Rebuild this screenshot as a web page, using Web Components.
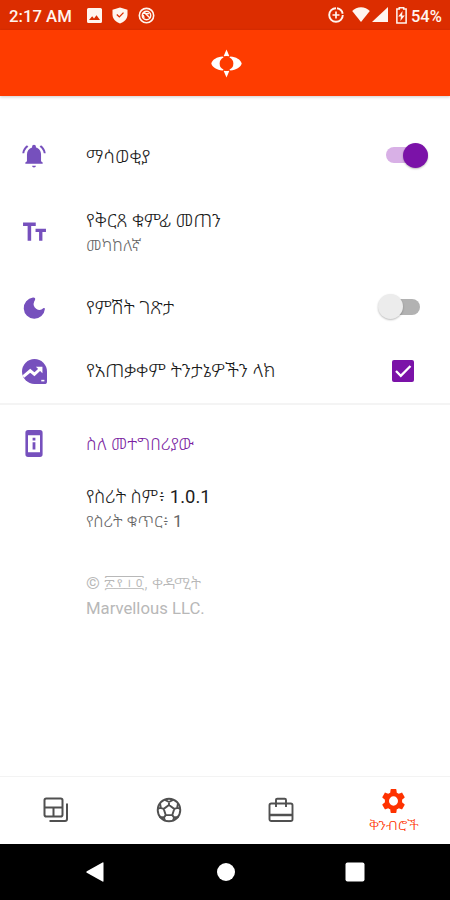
<!DOCTYPE html>
<html lang="am"><head><meta charset="utf-8"><title>ቅንብሮች</title>
<style>
html,body{margin:0;height:100%;background:#fff}
body{font-family:Roboto,"Noto Sans Ethiopic","Noto Sans",sans-serif;overflow:hidden}
</style></head><body>
<settings-app></settings-app>
<script>
const make=(name,html,init)=>customElements.define(name,class extends HTMLElement{
  connectedCallback(){
    if(this.shadowRoot)return;
    this.attachShadow({mode:'open'}).innerHTML=html;
    if(init)init(this,this.shadowRoot);
  }
});

/* One line of text, condensed or widened to the width given in "w". */
make('fit-text',`<style>
:host{display:block;white-space:nowrap;font-size:18px;line-height:24px;font-weight:300;color:#1c1c1c}
span{display:inline-block;transform-origin:0 50%}
</style><span><slot></slot></span>`,(el,root)=>{
  const s=root.querySelector('span');
  const natural=s.offsetWidth,w=+el.getAttribute('w');
  if(natural&&w){el.style.width=w+'px';s.style.transform=`scaleX(${w/natural})`}
});

const ICONS={
bell:['0 0 24 24','<path d="M12 22.500c1.100 0 1.700-.6 1.700-1.500h-3.400c0 .9.6 1.500 1.700 1.500zm6.500-5.700v-6.300c0-3.200-1.900-5.600-4.700-6.300v-.7a1.800 1.800 0 0 0-3.600 0v.7c-2.800.7-4.700 3.100-4.700 6.300v6.300L4 18v1.200h16V18zM6.800 3.400 5.500 2C3.100 3.800 1.500 6.300 1.200 9.400H3c.3-2.400 1.700-4.500 3.800-6zM21 9.400h1.800c-.3-3.100-1.900-5.600-4.300-7.400l-1.300 1.400c2.100 1.500 3.500 3.600 3.800 6z"/>'],
size:['0 0 24 24','<path d="M1 2.500v3.300h4.400V20h3.400V5.800h4.400V2.500zM13 8.500v3h3.400V20h3.200v-8.500H23v-3z"/>'],
moon:['0 0 24 24','<path d="M11 1.600a10.600 10.600 0 1 0 11.900 11.500c.1-.9-.9-1.400-1.600-.8a5.800 5.800 0 0 1-9.200-6.500c.2-.7.5-1.300.9-1.900.7-1.200-.1-2.500-2-2.300z"/>'],
stats:['0 0 24 24','<path d="M12 0a12 12 0 0 0 0 24h9.500a2.500 2.500 0 0 0 2.500-2.500V12A12 12 0 0 0 12 0z"/><path d="m1.200 17 6.700-5.700 4 3.300 6-5.500" fill="none" stroke="#fff" stroke-width="2.800"/><path d="M13.300 7.500h6.300v6.200z" fill="#fff"/><path d="M18.500 20h3v1.500h-3z" fill="#fff"/>'],
phone:['0 0 18 26','<path fill-rule="evenodd" d="M3 0h12a2.600 2.600 0 0 1 2.600 2.600v20.800A2.600 2.600 0 0 1 15 26H3a2.600 2.600 0 0 1-2.600-2.600V2.600A2.600 2.600 0 0 1 3 0zM3 5v16.500h12V5zM7.600 7.500h2.800v2.600H7.600zM7.600 11.800h2.800v7H7.600z"/>'],
logo:['0 0 32 30','<path d="M13 7.600 16 .5l3 7.100q-3-.9-6 0zM13 22.400l3 7.100 3-7.100q-3 .9-6 0z"/><path d="M12 7.800C6 8.300 1.500 10.800.3 15c1.200 4.200 5.700 6.700 11.700 7.200l1-.9a6.900 6.900 0 0 1 0-12.600zM20 7.800c6 .5 10.500 3 11.700 7.200-1.200 4.200-5.700 6.700-11.700 7.200l-1-.9a6.900 6.900 0 0 0 0-12.600z"/>'],
news:['0 0 26 26','<g fill="none" stroke="currentColor" stroke-width="2"><rect x="1.500" y="1.500" width="18" height="18" rx="1.800"/><path d="M1.500 10.500h18M10.500 10.500v9M24 6.500V22q0 2-2 2H6.500"/></g>'],
ball:['0 0 26 26','<g fill="none" stroke="currentColor" stroke-width="1.900"><circle cx="13" cy="13" r="11.300"/><path d="m13 8 5.300 3.900-2 6.200H9.700l-2-6.200zM13 8V4.800M18.300 11.900l3.200-1M16.300 18.100l2 2.800M9.700 18.100l-2 2.800M7.700 11.900l-3.200-1M8.500 2.700 13 5l4.500-2.300M24.200 12l-3-1.500.8-4M17 23.600l1.200-3.100 4.500-.5M9 23.600l-1.200-3.100L3.300 20M1.800 12l3-1.500L4 6.500"/></g>'],
brief:['0 0 26 26','<g fill="none" stroke="currentColor" stroke-width="1.900"><rect x="1.500" y="6.500" width="23" height="17.500" rx="1.800"/><path d="M8 10V3q0-1.300 1.300-1.300h7.400Q18 1.700 18 3v7"/><path d="M1.500 18h23" stroke-width="2.500"/></g>'],
gear:['2 2 20 20','<path d="M19.430 12.980c.04-.32.07-.64.07-.98s-.03-.66-.07-.98l2.110-1.650c.19-.15.240-.42.120-.64l-2-3.460c-.12-.22-.39-.3-.61-.22l-2.490 1c-.52-.4-1.080-.73-1.690-.98l-.38-2.650C14.460 2.180 14.250 2 14 2h-4c-.25 0-.46.180-.49.420l-.38 2.650c-.61.250-1.170.590-1.690.980l-2.490-1c-.23-.09-.49 0-.61.220l-2 3.460c-.13.220-.07.490.12.640l2.110 1.650c-.04.320-.07.650-.07.980s.03.660.07.980l-2.110 1.650c-.19.150-.24.420-.12.640l2 3.460c.12.220.39.300.61.220l2.490-1c.52.400 1.080.730 1.690.980l.38 2.650c.03.240.24.420.49.420h4c.25 0 .46-.18.49-.42l.38-2.650c.61-.25 1.170-.59 1.690-.98l2.490 1c.23.090.49 0 .61-.22l2-3.460c.12-.22.070-.49-.12-.64zM12 15.900a3.900 3.900 0 1 1 0-7.800 3.900 3.900 0 0 1 0 7.800z"/>'],
picture:['0 0 15 15','<path fill-rule="evenodd" d="M1.500 0h12A1.500 1.500 0 0 1 15 1.500v12a1.500 1.500 0 0 1-1.500 1.500h-12A1.500 1.500 0 0 1 0 13.500v-12A1.500 1.500 0 0 1 1.500 0zM2 12h11L9.500 7.200 7 10.400 5.200 8.300z"/>'],
shield:['0 0 16 18','<path d="M8 .5 15.500 3v5c0 4.500-3 7.800-7.500 9.500C3.500 15.800.5 12.500.5 8V3z"/><path d="m4.800 8 2.500 2.500 4.200-4.500" fill="none" stroke="#dc2d00" stroke-width="1.300"/>'],
swirl:['0 0 18 18','<g fill="none" stroke="currentColor"><circle cx="9" cy="9" r="7.600" stroke-width="1.700"/><circle cx="9" cy="9" r="4.500" stroke-width="1.500"/><path d="m5 7 2-1 3 3 3 3M8 7h4M6.500 11.500l-1-3" stroke-width="1.500"/></g>'],
sync:['0 0 16 16','<g fill="none" stroke="currentColor"><path d="M8 1.200a6.800 6.800 0 1 0 6.800 6.800" stroke-width="1.900"/><path d="M9 1.300a6.800 6.800 0 0 1 5.700 5.400" stroke-width="1.900"/><path d="M8 4.500v7M4.500 8h7" stroke-width="1.700"/></g>'],
wifi:['0 0 18 15','<path d="M9 15 .2 4C2.500 1.500 5.500.2 9 .2S15.500 1.500 17.800 4z"/>'],
cell:['0 0 16 16','<path d="M0 16 16 0v16z"/>'],
battery:['0 0 10 17','<path fill="none" stroke="currentColor" stroke-width="1.400" d="M3 2V.8h4V2h2.200v14H.8V2z"/><path d="M6 4 2 9.500h2.500L4 14l4-5.500H5.500z"/>'],
back:['0 0 18 20','<path d="M17.500 1v18q0 1-1 .5L.8 10.800q-1-.8 0-1.600L16.500.5q1-.5 1 .5z"/>'],
home:['0 0 18 18','<circle cx="9" cy="9" r="9"/>'],
recent:['0 0 20 20','<rect x=".5" y=".5" width="19" height="19" rx="2"/>']
};
make('ui-icon',`<style>:host{display:block;flex:none}svg{display:block;width:100%;height:100%;fill:currentColor}</style><svg preserveAspectRatio="none"></svg>`,(el,root)=>{
  const [box,shape]=ICONS[el.getAttribute('name')],svg=root.querySelector('svg');
  svg.setAttribute('viewBox',box);svg.innerHTML=shape;
  el.style.width=el.getAttribute('w')+'px';
  el.style.height=(el.getAttribute('h')||el.getAttribute('w'))+'px';
});

make('status-bar',`<style>
:host{display:flex;height:30px;box-sizing:border-box;padding:1px 8px 0 9px;align-items:center;background:#dc2d00;color:#fff5ef}
.gap{flex:1}fit-text{color:inherit;font-weight:500;font-size:17px;padding-top:1px}
</style><fit-text w="63">2:17 AM</fit-text>
<ui-icon name="picture" w="15" style="margin-left:15px"></ui-icon>
<ui-icon name="shield" w="16" h="17" style="margin-left:10px"></ui-icon>
<ui-icon name="swirl" w="17" style="margin-left:10px"></ui-icon><div class="gap"></div>
<ui-icon name="sync" w="16" style="margin:0 8px 1px 0"></ui-icon>
<ui-icon name="wifi" w="18" h="15" style="margin:0 2px 2px 0"></ui-icon>
<ui-icon name="cell" w="16" h="15" style="margin:0 8px 2px 0"></ui-icon>
<ui-icon name="battery" w="11" h="17" style="margin:0 4px 1px 0"></ui-icon>
<fit-text w="31">54%</fit-text>`);

make('app-bar',`<style>
:host{display:flex;height:66px;align-items:center;justify-content:center;background:#fe3c00;color:#fff;box-shadow:0 1px 3px #0003;padding-left:2px;box-sizing:border-box}
</style><ui-icon name="logo" w="31" h="29"></ui-icon>`);

make('setting-row',`<style>
:host{display:grid;grid-template-columns:86px 1fr auto;align-items:center;box-sizing:border-box;padding-right:22px}
.i{display:flex;justify-content:center;width:68px;color:#7650bd}
</style><div class="i"><slot name="icon"></slot></div><div><slot></slot></div><slot name="end"></slot>`);

make('toggle-switch',`<style>
:host{display:flex;align-items:center;width:34px;height:16px;border-radius:8px;background:#b2b2b2;margin:0 8px 2px 0}
i{width:25px;height:25px;border-radius:50%;background:#ececec;box-shadow:0 1px 2px #0004;flex:none;margin-left:-8px}
:host([on]){background:#d8b0e6;margin-right:0;width:42px;justify-content:flex-end}
:host([on]) i{background:#7b12a8;margin:0}
</style><i></i>`);

make('check-box',`<style>:host{display:block;width:22px;height:22px;border-radius:2px;background:#7b12a8;margin-right:14px}svg{display:block}</style>
<svg width="22" height="22"><path d="m4 11 4.800 4.800L18.500 6" fill="none" stroke="#fff" stroke-width="2.300"/></svg>`);

make('tab-bar',`<style>
:host{display:grid;grid-template-columns:repeat(4,1fr);height:68px;box-sizing:border-box;border-top:1px solid #f3f3f3;color:#505050;background:#fff;justify-items:center;align-items:center;padding-bottom:1px}
.on{color:#fe3200;display:flex;flex-direction:column;align-items:center;gap:3px;padding-top:4px}
.on fit-text{color:inherit;font-size:13px;line-height:20px}
</style><ui-icon name="news" w="26"></ui-icon><ui-icon name="ball" w="26"></ui-icon><ui-icon name="brief" w="26"></ui-icon>
<div class="on"><ui-icon name="gear" w="23" h="24"></ui-icon><fit-text w="50">ቅንብሮች</fit-text></div>`);

make('system-nav',`<style>
:host{display:grid;grid-template-columns:30px 130px 131px 128px 31px;height:56px;background:#000;color:#fff;justify-items:center;align-items:center}
</style><i></i><ui-icon name="back" w="18" h="20"></ui-icon><ui-icon name="home" w="18"></ui-icon><ui-icon name="recent" w="20" h="20"></ui-icon>`);

make('settings-app',`<style>
:host{display:flex;flex-direction:column;width:450px;height:900px;background:#fff}
main{flex:1;padding-top:28px;min-height:0}
.sub{font-size:16px;color:#666;padding-top:1px}
.accent{color:#7b1fa2}
b{font-weight:400}
hr{margin:0;border:0;height:2px;background:#f4f4f4}
footer{padding:35px 0 0 86px}
footer fit-text{color:#b8b8b8;font-size:16px;line-height:25px}
</style>
<status-bar></status-bar><app-bar></app-bar>
<main>
<setting-row style="height:64px"><ui-icon slot="icon" name="bell" w="26"></ui-icon><fit-text style="padding-top:1px" w="64">ማሳወቂያ</fit-text><toggle-switch slot="end" on></toggle-switch></setting-row>
<setting-row style="height:88px"><ui-icon slot="icon" name="size" w="25"></ui-icon><div><fit-text style="padding-top:2px" w="135">የቅርጸ ቁምፊ መጠን</fit-text><fit-text class="sub" w="55">መካከለኛ</fit-text></div></setting-row>
<setting-row style="height:63px"><ui-icon slot="icon" name="moon" w="24"></ui-icon><fit-text w="88">የምሽት ገጽታ</fit-text><toggle-switch slot="end"></toggle-switch></setting-row>
<setting-row style="height:64px"><ui-icon slot="icon" name="stats" w="25"></ui-icon><fit-text w="189">የአጠቃቀም ትንታኔዎችን ላክ</fit-text><check-box slot="end"></check-box></setting-row>
<hr>
<setting-row style="height:77px"><ui-icon slot="icon" name="phone" w="18" h="27"></ui-icon><fit-text class="accent" style="font-size:17px" w="108">ስለ መተግበሪያው</fit-text></setting-row>
<setting-row style="height:54px"><div><fit-text w="125">የስሪት ስም፥ <b>1.0.1</b></fit-text><fit-text class="sub" w="97">የስሪት ቁጥር፥ <b>1</b></fit-text></div></setting-row>
<footer><fit-text w="115"><b>©</b> ፳፻፲፬, ቀዳሚት</fit-text><fit-text w="119"><b>Marvellous LLC.</b></fit-text></footer>
</main>
<tab-bar></tab-bar><system-nav></system-nav>`);
</script></body></html>
